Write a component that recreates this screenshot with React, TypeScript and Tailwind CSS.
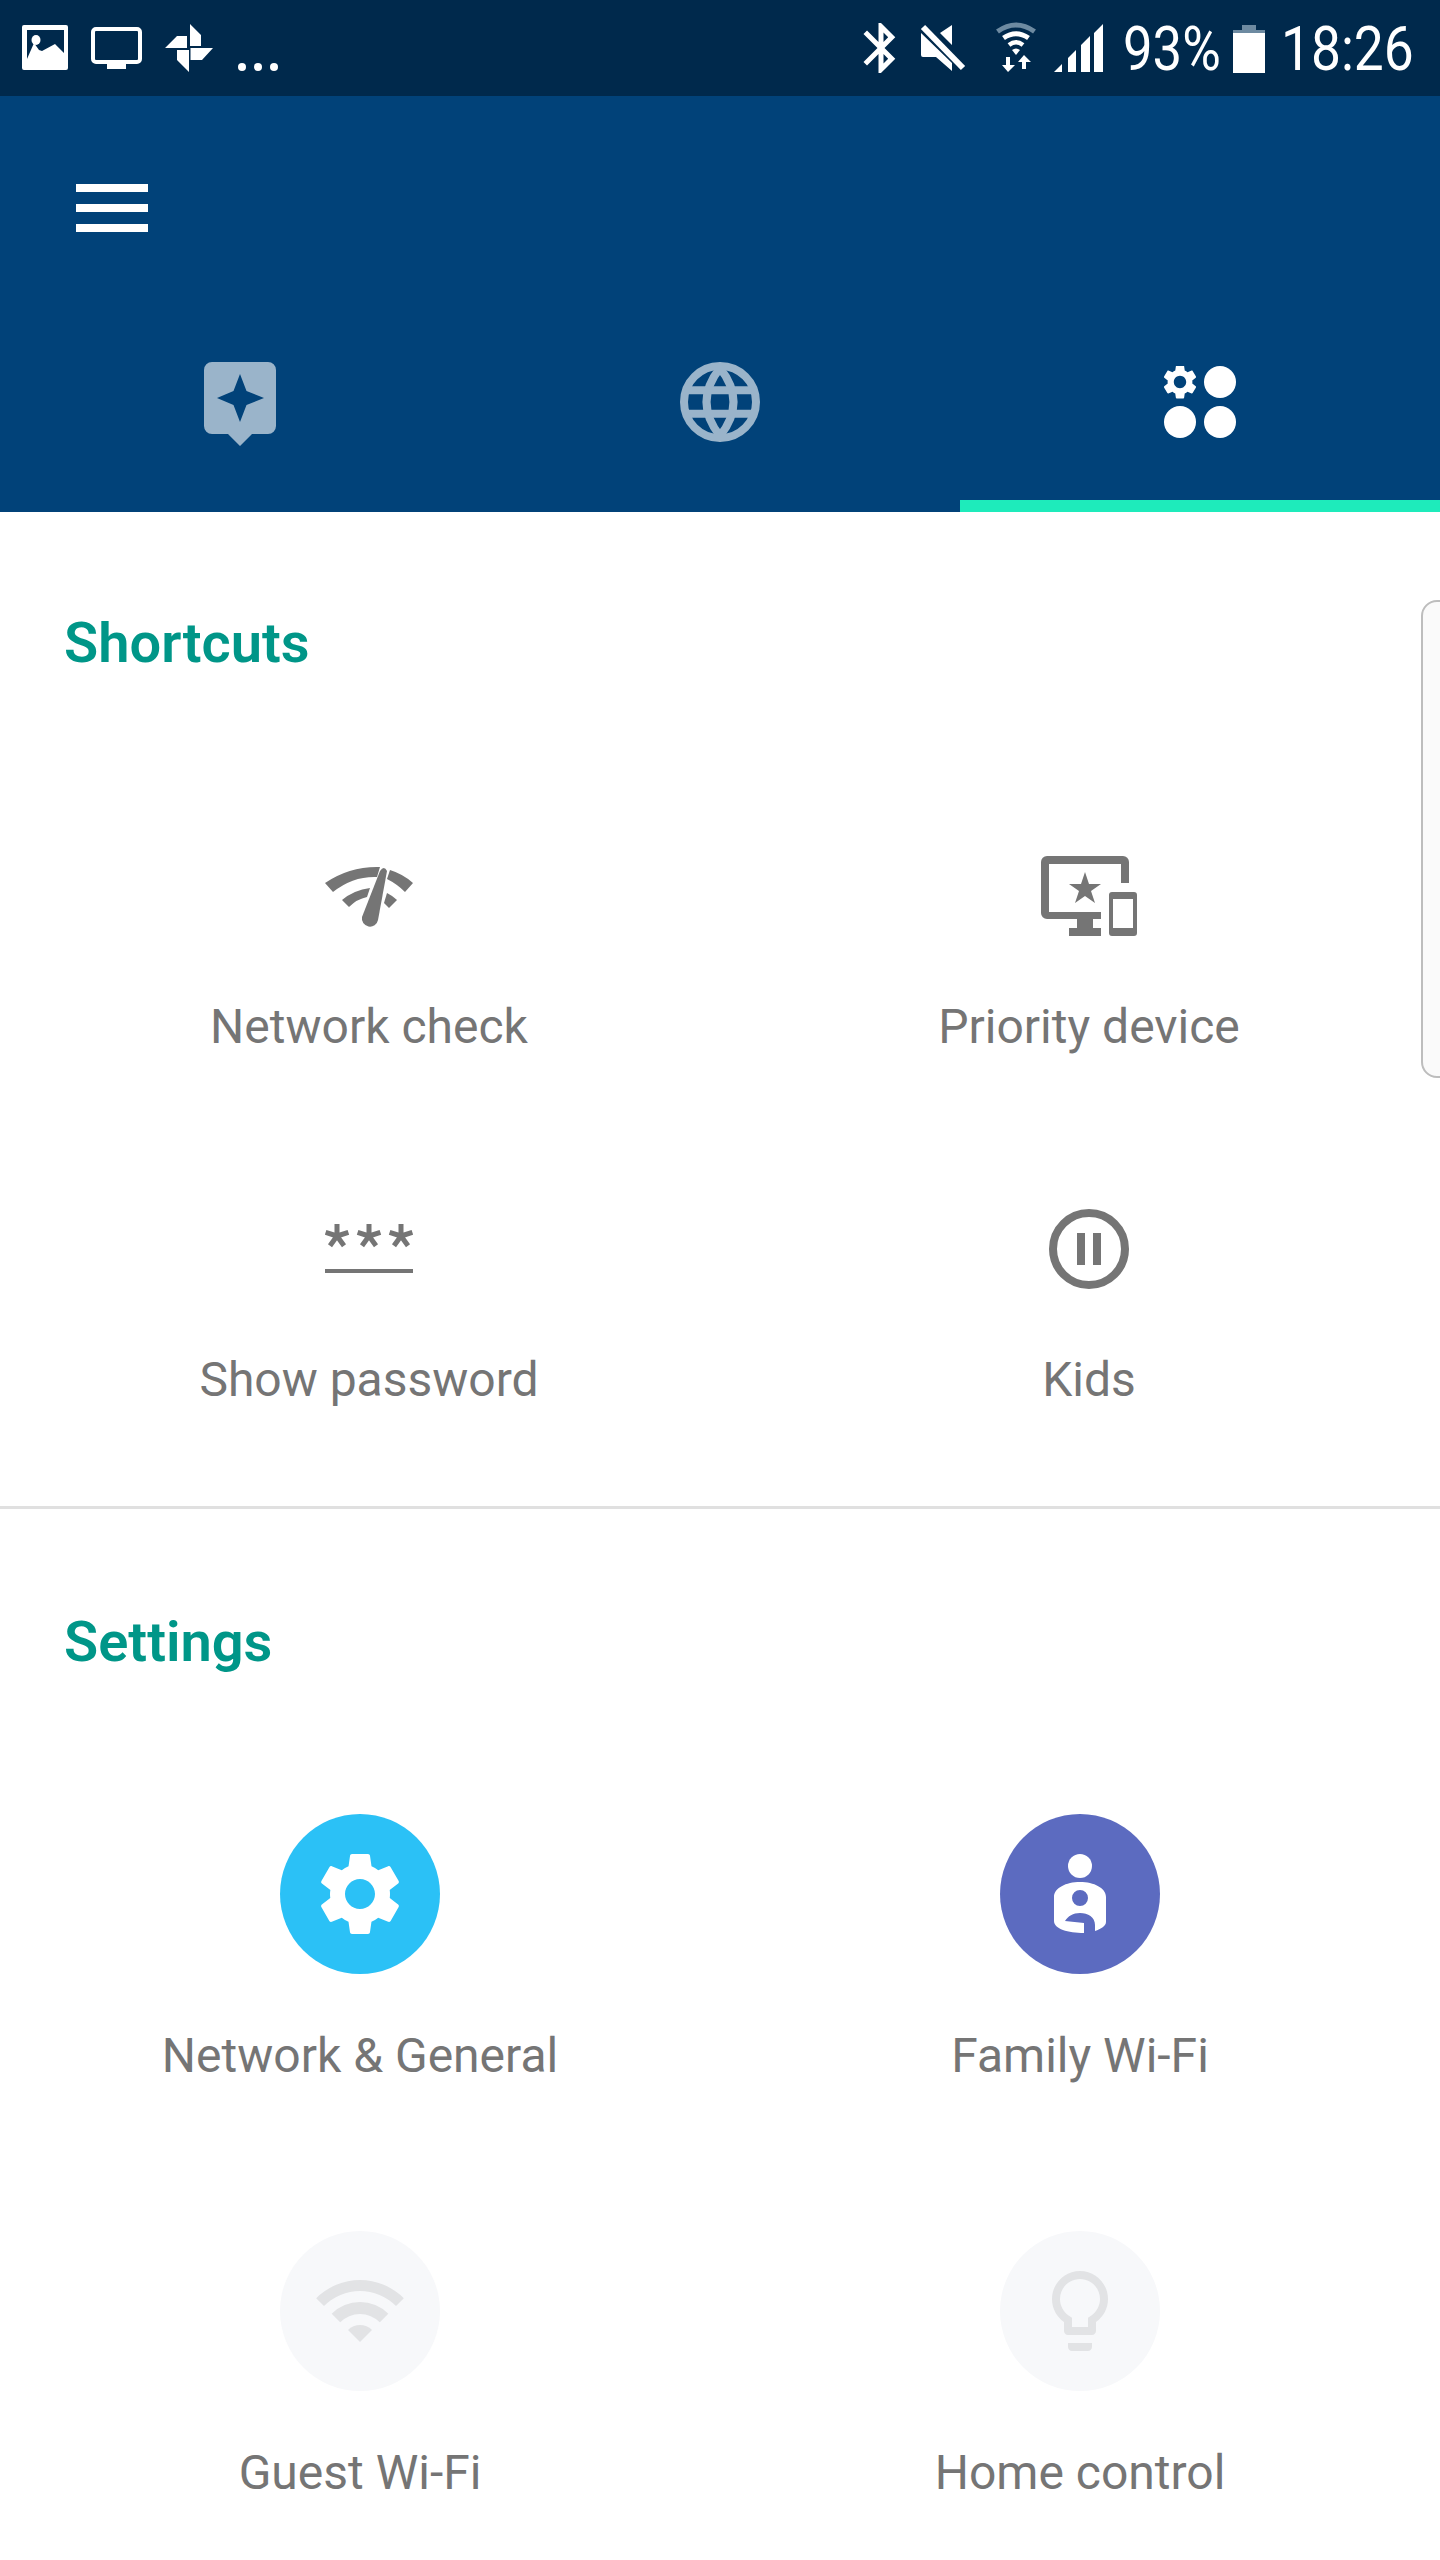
const GEAR =
  "M19.14 12.94c.04-.3.06-.61.06-.94 0-.32-.02-.64-.07-.94l2.03-1.58c.18-.14.23-.41.12-.61l-1.92-3.32c-.12-.22-.37-.29-.59-.22l-2.39.96c-.5-.38-1.03-.7-1.62-.94l-.36-2.54c-.04-.24-.24-.41-.48-.41h-3.84c-.24 0-.43.17-.47.41l-.36 2.54c-.59.24-1.13.57-1.62.94l-2.39-.96c-.22-.08-.47 0-.59.22L2.74 8.87c-.12.21-.08.47.12.61l2.03 1.58c-.05.3-.09.63-.09.94s.02.64.07.94l-2.03 1.58c-.18.14-.23.41-.12.61l1.92 3.32c.12.22.37.29.59.22l2.39-.96c.5.38 1.03.7 1.62.94l.36 2.54c.05.24.24.41.48.41h3.84c.24 0 .44-.17.47-.41l.36-2.54c.59-.24 1.13-.56 1.62-.94l2.39.96c.22.08.47 0 .59-.22l1.92-3.32c.12-.22.07-.47-.12-.61l-2.01-1.58zM12 15.6c-1.98 0-3.6-1.62-3.6-3.6s1.62-3.6 3.6-3.6 3.6 1.62 3.6 3.6-1.62 3.6-3.6 3.6z";

function StatusLeft() {
  return (
    <svg width="260" height="96" viewBox="20 0 260 96" className="block">
      <path
        fill="#fff"
        fillRule="evenodd"
        d="M24 25h42a2 2 0 0 1 2 2v41a2 2 0 0 1-2 2H24a2 2 0 0 1-2-2V27a2 2 0 0 1 2-2zM27 30v29l7-16 5 7 3 1 13-7 9 9V30z"
      />
      <ellipse cx="36" cy="40" rx="4.5" ry="5" fill="#fff" />
      <rect x="93" y="29" width="47" height="33" rx="3" fill="none" stroke="#fff" strokeWidth="4" />
      <rect x="107" y="64" width="19" height="5" fill="#fff" />
      <path
        fill="#fff"
        d="M190 24l11 11v11h-11zM165 48l12-12h10v12zM213 48l-11 12h-11.500V48zM189 72l-12-12V50h12z"
      />
      <circle cx="242" cy="67" r="4" fill="#fff" />
      <circle cx="258" cy="67" r="4" fill="#fff" />
      <circle cx="274" cy="67" r="4" fill="#fff" />
    </svg>
  );
}

function StatusIcons() {
  return (
    <svg width="245" height="96" viewBox="860 0 245 96" className="block">
      <g transform="translate(851 18) scale(2.5)">
        <path
          fill="#fff"
          d="M17.71 7.71L12 2h-1v7.590L6.410 5 5 6.410 10.590 12 5 17.590 6.410 19 11 14.410V22h1l5.710-5.710-4.300-4.290 4.300-4.290zM13 5.830l1.880 1.880L13 9.590V5.830zm1.880 10.460L13 18.170v-3.760l1.880 1.880z"
        />
      </g>
      <path fill="#fff" d="M952 25l-12 8 12 12zM921 33v22a2 2 0 0 0 2 2h13l16 14V63z" />
      <path d="M923 27l40 41" stroke="#fff" strokeWidth="6" fill="none" />
      <path d="M997.500 31.500q18.500-13 37 0" stroke="#6d8aa1" strokeWidth="5" fill="none" />
      <path d="M1003.500 38q12.500-8.500 25 0" stroke="#fff" strokeWidth="5" fill="none" />
      <path d="M1009 45q7-5.500 14 0" stroke="#fff" strokeWidth="4.500" fill="none" />
      <path d="M1012 50q4-3 8 0l-4 5z" fill="#fff" />
      <path fill="#fff" d="M1006 57h4v8h5l-7 7-6-7h4zM1022 69v-7h-4l6-7 7 7h-5v7z" />
      <path
        fill="#fff"
        d="M1054 72l8-8v8zM1068 72V58l8-8v22zM1081 72V45l9-9v36zM1094 72V33l9-9v48z"
      />
    </svg>
  );
}

function BatteryIcon() {
  return (
    <svg width="32" height="48" viewBox="0 0 32 48" className="block">
      <rect x="9" y="0" width="14" height="5" fill="#6d8aa1" />
      <rect x="0" y="5" width="32" height="3" fill="#6d8aa1" />
      <rect x="0" y="8" width="32" height="40" fill="#fff" />
    </svg>
  );
}

function TipsIcon() {
  return (
    <svg width="72" height="84" viewBox="204 362 72 84" className="block">
      <path
        fill="#9ab4ca"
        fillRule="evenodd"
        d="M212 362h56a8 8 0 0 1 8 8v56a8 8 0 0 1-8 8h-16l-12 12-12-12h-16a8 8 0 0 1-8-8v-56a8 8 0 0 1 8-8zM240 374l-6.500 17-16.500 7 16.500 7 6.500 17 6.500-17 17.500-7-17.500-7z"
      />
    </svg>
  );
}

function GlobeIcon() {
  return (
    <svg width="80" height="80" viewBox="0 0 80 80" fill="none" stroke="#9ab4ca" strokeWidth="8" className="block">
      <circle cx="40" cy="40" r="36" />
      <path d="M40 6Q13 40 40 74Q67 40 40 6Z" />
      <path d="M6 28.300h68M6 51.700h68" />
    </svg>
  );
}

function ManageIcon() {
  return (
    <svg width="72" height="72" viewBox="0 0 72 72" className="block" fill="#fff">
      <g transform="translate(16 16) scale(1.72) translate(-12 -12)">
        <path d={GEAR} />
      </g>
      <circle cx="56" cy="16" r="16" />
      <circle cx="16" cy="56" r="16" />
      <circle cx="56" cy="56" r="16" />
    </svg>
  );
}

function NetworkCheckIcon() {
  return (
    <svg width="160" height="120" viewBox="9 -4 160 120" fill="#757575" className="block">
      <path d="M45 43Q70 26 100 27L97 37Q73 36 53 52Z" />
      <path d="M110 30Q123 34 133 43L125 52Q117 44 107 39Z" />
      <path d="M62 60Q74 50 90 48L87 57Q77 59 69 67Z" />
      <path d="M107 53Q113 56 117 60L109 68L104 63Z" />
      <path d="M100 31Q104 25 107 31L98 80A8 8 0 1 1 82 77Z" />
    </svg>
  );
}

function PriorityDeviceIcon() {
  return (
    <svg width="96" height="80" viewBox="1041 856 96 80" fill="#757575" className="block">
      <path d="M1047 856h76a6 6 0 0 1 6 6v21h-8v-19h-72v48h52v7h-8v9h8v8h-32v-8h8v-9h-30a6 6 0 0 1-6-6v-51a6 6 0 0 1 6-6z" />
      <path d="M1085 872l4 12h12l-10 7 4 12-10-7-10 7 4-12-10-7h12z" />
      <path
        fillRule="evenodd"
        d="M1112 892h22a3 3 0 0 1 3 3v38a3 3 0 0 1-3 3h-22a3 3 0 0 1-3-3v-38a3 3 0 0 1 3-3zM1113 899v29h20v-29z"
      />
    </svg>
  );
}

function Asterisk({ cx }: { cx: number }) {
  return (
    <path
      d={`M${cx} 1224v12M${cx} 1236l11.400-3.700M${cx} 1236l7 9.700M${cx} 1236l-7 9.700M${cx} 1236l-11.400-3.700`}
      stroke="#757575"
      strokeWidth="5"
      fill="none"
    />
  );
}

function PasswordIcon() {
  return (
    <svg width="88" height="96" viewBox="325 1201 88 96" className="block">
      <Asterisk cx={337} />
      <Asterisk cx={369} />
      <Asterisk cx={401} />
      <rect x="325" y="1269" width="88" height="4" fill="#757575" />
    </svg>
  );
}

function PauseIcon() {
  return (
    <svg width="80" height="80" viewBox="0 0 80 80" className="block">
      <circle cx="40" cy="40" r="36" fill="none" stroke="#757575" strokeWidth="8" />
      <rect x="28" y="24" width="8" height="32" fill="#757575" />
      <rect x="44" y="24" width="8" height="32" fill="#757575" />
    </svg>
  );
}

function GearIcon() {
  return (
    <svg width="100" height="100" viewBox="0 0 24 24" fill="#fff" className="block">
      <path d={GEAR} />
    </svg>
  );
}

function FamilyIcon() {
  return (
    <svg width="160" height="160" viewBox="1000 1814 160 160" fill="#fff" className="block">
      <circle cx="1080" cy="1866" r="12" />
      <path
        fillRule="evenodd"
        d="M1054 1897c0-9 12-15 26-15s26 6 26 15v25c0 4-5 7-11 9v-6c0-8-7-12-15-12-7 0-12 3-15 8l19 2v10c-16 0-30-4-30-12zM1080 1890a8 8 0 1 0 0 16 8 8 0 0 0 0-16z"
      />
    </svg>
  );
}

function WifiFadedIcon() {
  return (
    <svg width="88" height="62" viewBox="316 2281 88 62" fill="#e2e3e5" className="block">
      <path d="M316.200 2299.200a62 62 0 0 1 87.600 0l-7.800 7.800a51 51 0 0 0-72 0z" />
      <path d="M331.700 2314.700a40 40 0 0 1 56.600 0l-8.500 8.500a28 28 0 0 0-39.600 0z" />
      <path d="M348 2331a17 17 0 0 1 24 0l-12 12z" />
    </svg>
  );
}

function BulbFadedIcon() {
  return (
    <svg width="96" height="96" viewBox="0 0 24 24" fill="#e2e3e5" className="block">
      <path d="M9 21c0 .55.45 1 1 1h4c.55 0 1-.45 1-1v-1H9v1zm3-19C8.140 2 5 5.140 5 9c0 2.380 1.190 4.470 3 5.740V17c0 .55.45 1 1 1h6c.55 0 1-.45 1-1v-2.260c1.810-1.270 3-3.360 3-5.740 0-3.860-3.140-7-7-7zm2.850 11.100l-.85.6V16h-4v-2.300l-.85-.6C7.800 12.160 7 10.630 7 9c0-2.760 2.240-5 5-5s5 2.240 5 5c0 1.630-.8 3.160-2.150 4.100z" />
    </svg>
  );
}

function Shortcut({ icon, label }: { icon: React.ReactNode; label: string }) {
  return (
    <div className="flex flex-col items-center">
      <div className="flex h-24 items-center justify-center">{icon}</div>
      <div className="mt-[55px] text-[48px] leading-[56px] text-[#757575]">{label}</div>
    </div>
  );
}

function SettingItem({ icon, label, bg }: { icon: React.ReactNode; label: string; bg: string }) {
  return (
    <div className="flex flex-col items-center">
      <div className={`flex h-40 w-40 items-center justify-center rounded-full ${bg}`}>{icon}</div>
      <div className="mt-[54px] text-[48px] leading-[56px] text-[#757575]">{label}</div>
    </div>
  );
}

export default function App() {
  return (
    <div className="relative h-[2560px] w-[1440px] overflow-hidden bg-white font-['Roboto',sans-serif]">
      <div className="flex h-24 items-center justify-between bg-[#00294c] pr-7">
        <div className="pl-5">
          <StatusLeft />
        </div>
        <div className="flex items-center">
          <div className="mr-5">
            <StatusIcons />
          </div>
          <div className="mt-[2px] w-[108px] text-[62px] leading-[96px] text-white">
            <span className="block origin-left -translate-x-[2px] scale-x-[0.85] whitespace-nowrap">93%</span>
          </div>
          <div className="mr-[19px] mt-[2px]">
            <BatteryIcon />
          </div>
          <div className="mt-[2px] w-[128px] text-[62px] leading-[96px] text-white">
            <span className="block origin-left -translate-x-[3px] scale-x-[0.86] whitespace-nowrap">18:26</span>
          </div>
        </div>
      </div>

      <header className="h-[416px] bg-[#014279]">
        <div className="flex flex-col gap-3 pl-[76px] pt-[88px]">
          <div className="h-2 w-[72px] bg-white" />
          <div className="h-2 w-[72px] bg-white" />
          <div className="h-2 w-[72px] bg-white" />
        </div>
        <div className="mt-[88px] grid h-48 grid-cols-3">
          <div className="flex items-center justify-center border-b-[12px] border-transparent pb-4 pt-1">
            <TipsIcon />
          </div>
          <div className="flex items-center justify-center border-b-[12px] border-transparent pb-4">
            <GlobeIcon />
          </div>
          <div className="flex items-center justify-center border-b-[12px] border-[#1eebbb] pb-4">
            <ManageIcon />
          </div>
        </div>
      </header>

      <section className="h-[997px] border-b-[3px] border-[#e0e0e0] pt-[98px]">
        <h2 className="pl-[64px] text-[56px] font-semibold leading-[66px] text-[#009688]">Shortcuts</h2>
        <div className="mt-[172px] grid grid-cols-[720px_720px] gap-y-[146px] pl-[9px]">
          <Shortcut icon={<NetworkCheckIcon />} label="Network check" />
          <Shortcut icon={<PriorityDeviceIcon />} label="Priority device" />
          <Shortcut icon={<PasswordIcon />} label="Show password" />
          <Shortcut icon={<PauseIcon />} label="Kids" />
        </div>
      </section>

      <section className="pt-[100px]">
        <h2 className="pl-[64px] text-[56px] font-semibold leading-[66px] text-[#009688]">Settings</h2>
        <div className="mt-[139px] grid grid-cols-2 gap-y-[147px]">
          <SettingItem icon={<GearIcon />} label="Network & General" bg="bg-[#2bc1f6]" />
          <SettingItem icon={<FamilyIcon />} label="Family Wi-Fi" bg="bg-[#5c6bc0]" />
          <SettingItem icon={<WifiFadedIcon />} label="Guest Wi-Fi" bg="bg-[#f7f8fa]" />
          <SettingItem icon={<BulbFadedIcon />} label="Home control" bg="bg-[#f7f8fa]" />
        </div>
      </section>

      <div className="absolute left-[1421px] top-[600px] h-[478px] w-[40px] rounded-l-[16px] border-2 border-[#bdbdbd] bg-[#fafafa]" />
    </div>
  );
}
